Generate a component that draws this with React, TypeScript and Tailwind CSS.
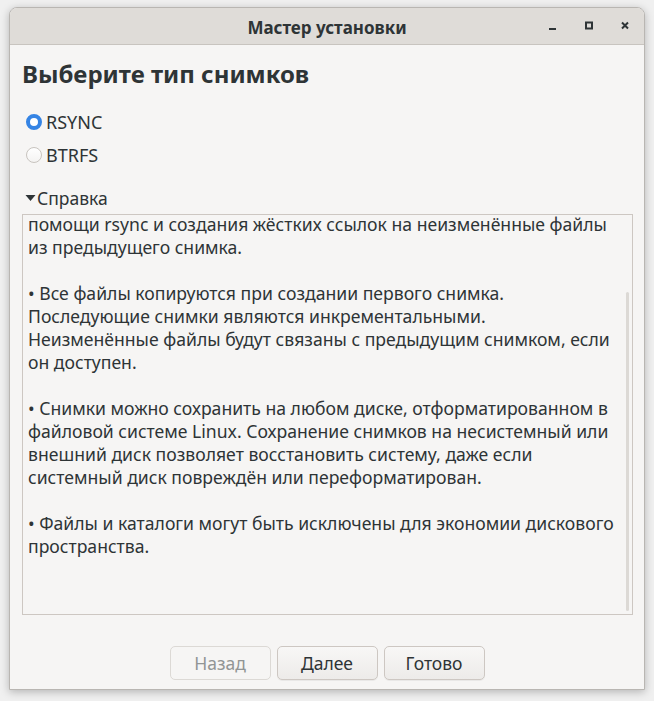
import React from "react";

const font = { fontFamily: '"Noto Sans", "DejaVu Sans", sans-serif' };

export default function App() {
  return (
    <div className="w-[654px] h-[701px] bg-[#f0f0f0] pt-[7px] pl-[9px]" style={font}>
      <div className="w-[636px] h-[683px] flex flex-col rounded-t-[8px] border border-[#b9b6b2] bg-[#f6f5f4] shadow-[0_2px_8px_rgba(0,0,0,0.25)] overflow-hidden">
        {/* title bar */}
        <div className="h-[37px] shrink-0 relative flex items-center justify-center bg-[#dfdcd8] border-b border-[#c8c4bf]">
          <span className="text-[17px] font-bold text-[#2e3436] leading-none mt-[2px]">Мастер установки</span>
          <div className="absolute right-[14px] top-0 h-full flex items-center gap-[26px]">
            <svg width="10" height="10" viewBox="0 0 10 10"><rect x="1" y="7" width="7" height="2" fill="#2e3436" /></svg>
            <svg width="10" height="10" viewBox="0 0 10 10"><rect x="2" y="1.5" width="6" height="6" fill="none" stroke="#2e3436" strokeWidth="2" /></svg>
            <svg width="10" height="10" viewBox="0 0 10 10"><path d="M2 1.5 L8 7.5 M8 1.5 L2 7.5" stroke="#2e3436" strokeWidth="2" /></svg>
          </div>
        </div>

        {/* body */}
        <div className="flex-1 flex flex-col px-[12px] text-[#2e3436]">
          <h1 className="mt-[13px] text-[24px] font-bold leading-[32px]">Выберите тип снимков</h1>

          <div className="mt-[22px] flex items-center h-[20px] pl-[4px]">
            <span className="w-[16px] h-[16px] rounded-full bg-white border-[4.5px] border-[#3584e4]" />
            <span className="ml-[4px] text-[18px]">RSYNC</span>
          </div>
          <div className="mt-[13px] flex items-center h-[20px] pl-[4px]">
            <span className="w-[16px] h-[16px] rounded-full bg-gradient-to-b from-white to-[#f4f3f2] border border-[#c8c4bf]" />
            <span className="ml-[4px] text-[18px]">BTRFS</span>
          </div>

          <div className="mt-[23px] flex items-center h-[20px] pl-[3px]">
            <svg width="11" height="8" viewBox="0 0 11 8"><path d="M0.5 1 L10.5 1 L5.5 7 Z" fill="#2e3436" /></svg>
            <span className="ml-[1px] text-[17.5px]">Справка</span>
          </div>

          <div className="mt-[6px] relative w-[611px] h-[401px] border border-[#cdc7c2] bg-[#f6f5f4] overflow-hidden">
            <div className="-mt-[2px] pl-[5px] text-[17.6px] leading-[23px] text-[#2e3436] whitespace-nowrap">
              <p>помощи rsync и создания жёстких ссылок на неизменённые файлы</p>
              <p>из предыдущего снимка.</p>
              <p>&nbsp;</p>
              <p>• Все файлы копируются при создании первого снимка.</p>
              <p>Последующие снимки являются инкрементальными.</p>
              <p>Неизменённые файлы будут связаны с предыдущим снимком, если</p>
              <p>он доступен.</p>
              <p>&nbsp;</p>
              <p>• Снимки можно сохранить на любом диске, отформатированном в</p>
              <p>файловой системе Linux. Сохранение снимков на несистемный или</p>
              <p>внешний диск позволяет восстановить систему, даже если</p>
              <p>системный диск повреждён или переформатирован.</p>
              <p>&nbsp;</p>
              <p>• Файлы и каталоги могут быть исключены для экономии дискового</p>
              <p>пространства.</p>
            </div>
            <div className="absolute right-[3px] top-[77px] bottom-[3px] w-[3px] rounded-full bg-[#dcd9d5]" />
          </div>

          <div className="mt-[31px] flex justify-center gap-[6px]">
            <button className="w-[101px] h-[34px] rounded-[5px] border border-[#dcd9d5] bg-[#f6f5f4] text-[17.5px] text-[#929595]">Назад</button>
            <button className="w-[101px] h-[34px] rounded-[5px] border border-[#cdc7c2] bg-gradient-to-b from-[#f8f7f6] to-[#edebe9] text-[17.5px] text-[#2e3436] shadow-[0_1px_0_rgba(0,0,0,0.05)]">Далее</button>
            <button className="w-[101px] h-[34px] rounded-[5px] border border-[#cdc7c2] bg-gradient-to-b from-[#f8f7f6] to-[#edebe9] text-[17.5px] text-[#2e3436] shadow-[0_1px_0_rgba(0,0,0,0.05)]">Готово</button>
          </div>
        </div>
      </div>
    </div>
  );
}
